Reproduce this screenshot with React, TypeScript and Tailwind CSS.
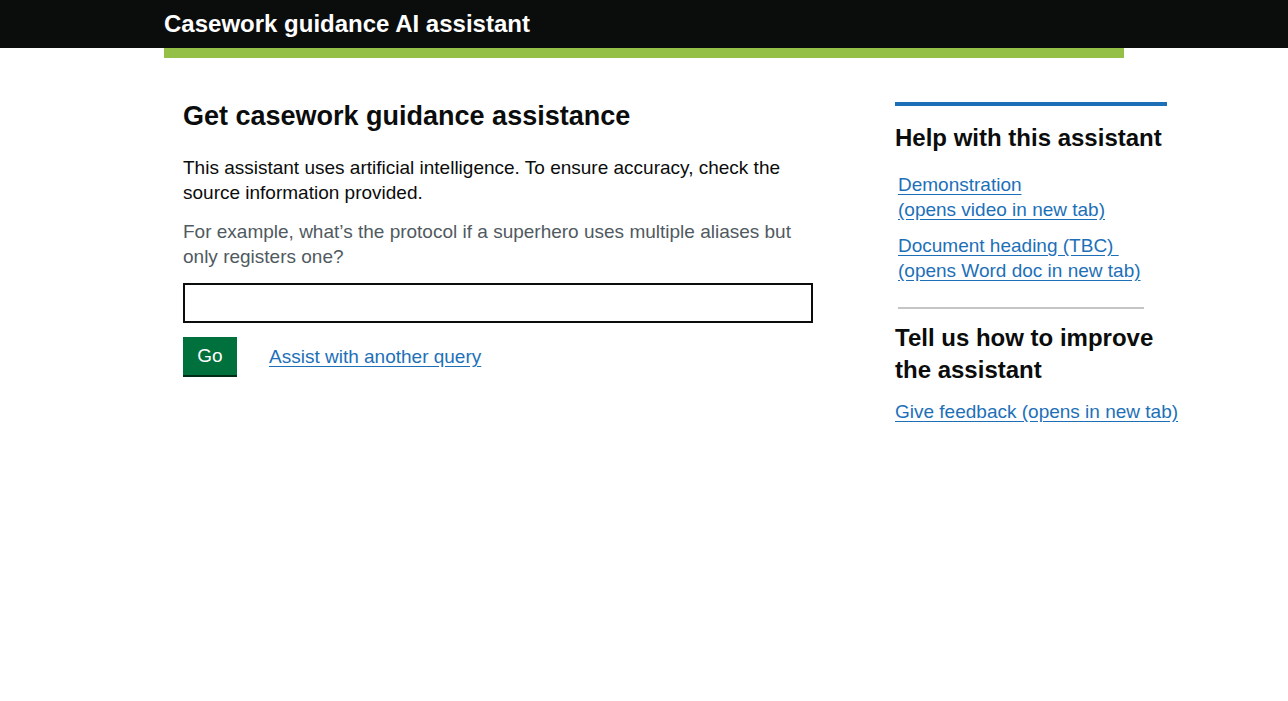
export default function App() {
  return (
    <div className="min-h-screen bg-white text-[#0b0c0c]" style={{ fontFamily: '"Liberation Sans", Arial, sans-serif' }}>
      <header className="bg-[#0b0c0c]">
        <div className="mx-auto flex h-12 w-[960px] items-center">
          <span className="text-[24px] font-bold leading-none text-white">Casework guidance AI assistant</span>
        </div>
      </header>
      <div className="mx-auto h-[10px] w-[960px] bg-[#94c047]" />

      <main className="mx-auto flex w-[960px] pl-[19px] pt-[42px]">
        <section className="w-[630px]">
          <h1 className="text-[27px] font-bold leading-8">Get casework guidance assistance</h1>
          <p className="mt-[23px] text-[19px] leading-[25px]">
            This assistant uses artificial intelligence. To ensure accuracy, check the source information provided.
          </p>
          <p className="mt-[14px] text-[19px] leading-[25px] text-[#505a5f]">
            For example, what’s the protocol if a superhero uses multiple aliases but only registers one?
          </p>
          <input
            type="text"
            aria-label="Query"
            className="mt-[14px] block h-10 w-[630px] border-2 border-[#0b0c0c] px-2 text-[19px] outline-none"
          />
          <div className="mt-[14px] flex items-center gap-8">
            <button className="h-[38px] w-[54px] bg-[#00703c] text-[19px] text-white shadow-[0_2px_0_#002d18]">Go</button>
            <a href="#" className="pt-[2px] text-[19px] text-[#1d70b8] underline underline-offset-[3px]">
              Assist with another query
            </a>
          </div>
        </section>

        <aside className="ml-[82px] w-[272px] shrink-0 pt-[2px]">
          <div className="h-1 bg-[#1d70b8]" />
          <h2 className="mt-[17px] text-[24px] font-bold leading-[30px]">Help with this assistant</h2>
          <ul className="mt-[19px] space-y-[11px] pl-[3px] text-[19px] leading-[25px]">
            <li>
              <a href="#" className="text-[#1d70b8] underline underline-offset-[3px]">
                Demonstration
                <br />
                (opens video in new tab)
              </a>
            </li>
            <li>
              <a href="#" className="text-[#1d70b8] underline underline-offset-[3px]">
                Document heading (TBC)&nbsp;
                <br />
                (opens Word doc in new tab)
              </a>
            </li>
          </ul>
          <hr className="ml-[3px] mt-[24px] w-[246px] border-t-2 border-[#c5c5c5]" />
          <h2 className="mt-[13px] text-[24px] font-bold leading-8">Tell us how to improve the assistant</h2>
          <a href="#" className="mt-[13px] inline-block whitespace-nowrap text-[19px] leading-[25px] text-[#1d70b8] underline underline-offset-[3px]">
            Give feedback (opens in new tab)
          </a>
        </aside>
      </main>
    </div>
  );
}
